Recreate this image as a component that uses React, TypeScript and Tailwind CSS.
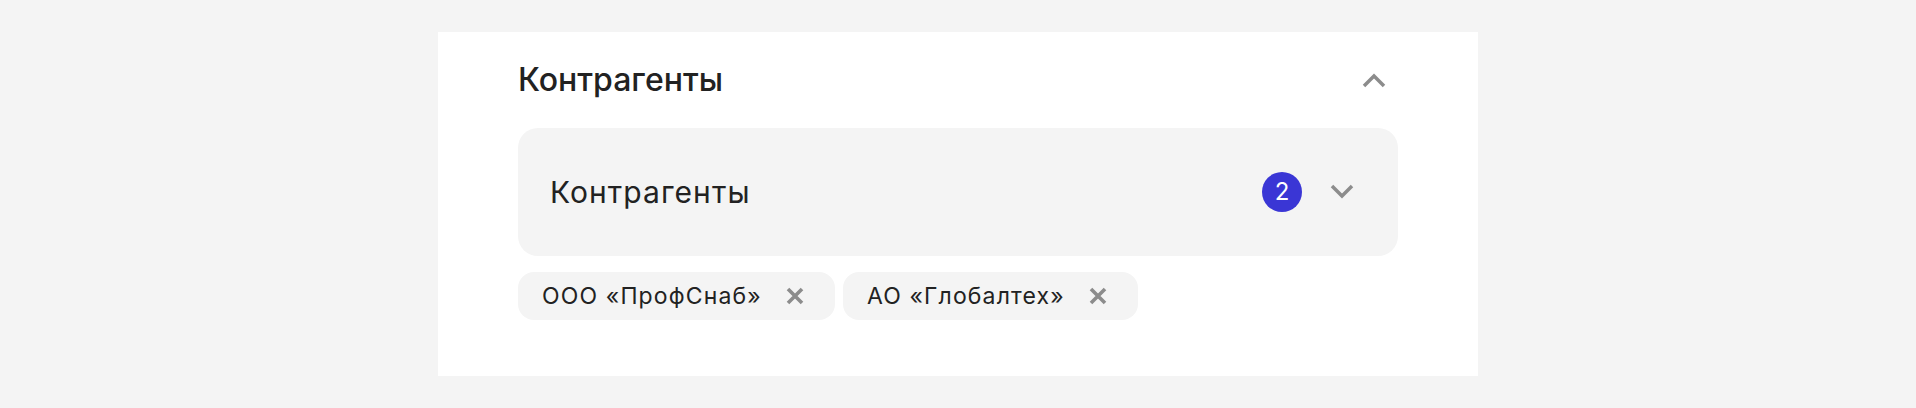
import React from 'react';

const chips = ['ООО «ПрофСнаб»', 'АО «Глобалтех»'];

const Chevron: React.FC<{ up?: boolean }> = ({ up }) => (
  <svg width="24" height="16" viewBox="0 0 24 16" fill="none">
    <path
      d={up ? 'M2 14L12 4L22 14' : 'M2 2L12 12L22 2'}
      stroke="#8c8c8c"
      strokeWidth="3.5"
    />
  </svg>
);

const CloseIcon = () => (
  <svg width="18" height="18" viewBox="0 0 18 18" fill="none">
    <path d="M2 2L16 16M16 2L2 16" stroke="#8c8c8c" strokeWidth="3.6" />
  </svg>
);

export default function App() {
  return (
    <div className="min-h-[408px] bg-[#f4f4f4] flex justify-center py-8 font-['Inter',sans-serif] text-[#222]">
      <div className="w-[1040px] bg-white px-20 pt-6 pb-14">
        <div className="h-12 flex items-center justify-between">
          <h2 className="text-[32px] leading-none font-medium">Контрагенты</h2>
          <button className="mr-3 flex items-center">
            <Chevron up />
          </button>
        </div>

        <div className="mt-6 h-32 rounded-[20px] bg-[#f4f4f4] flex items-center pl-8 pr-11">
          <span className="text-[30px] leading-none tracking-[0.035em]">Контрагенты</span>
          <span className="ml-auto w-10 h-10 rounded-full bg-[#3a36d5] text-white text-[24px] leading-none flex items-center justify-center">
            2
          </span>
          <span className="ml-7 flex items-center">
            <Chevron />
          </span>
        </div>

        <div className="mt-4 flex gap-2">
          {chips.map((c) => (
            <div
              key={c}
              className="h-12 rounded-2xl bg-[#f4f4f4] pl-6 pr-[31px] flex items-center gap-6 text-[23px] leading-none tracking-[0.05em]"
            >
              <span>{c}</span>
              <button className="flex items-center">
                <CloseIcon />
              </button>
            </div>
          ))}
        </div>
      </div>
    </div>
  );
}
